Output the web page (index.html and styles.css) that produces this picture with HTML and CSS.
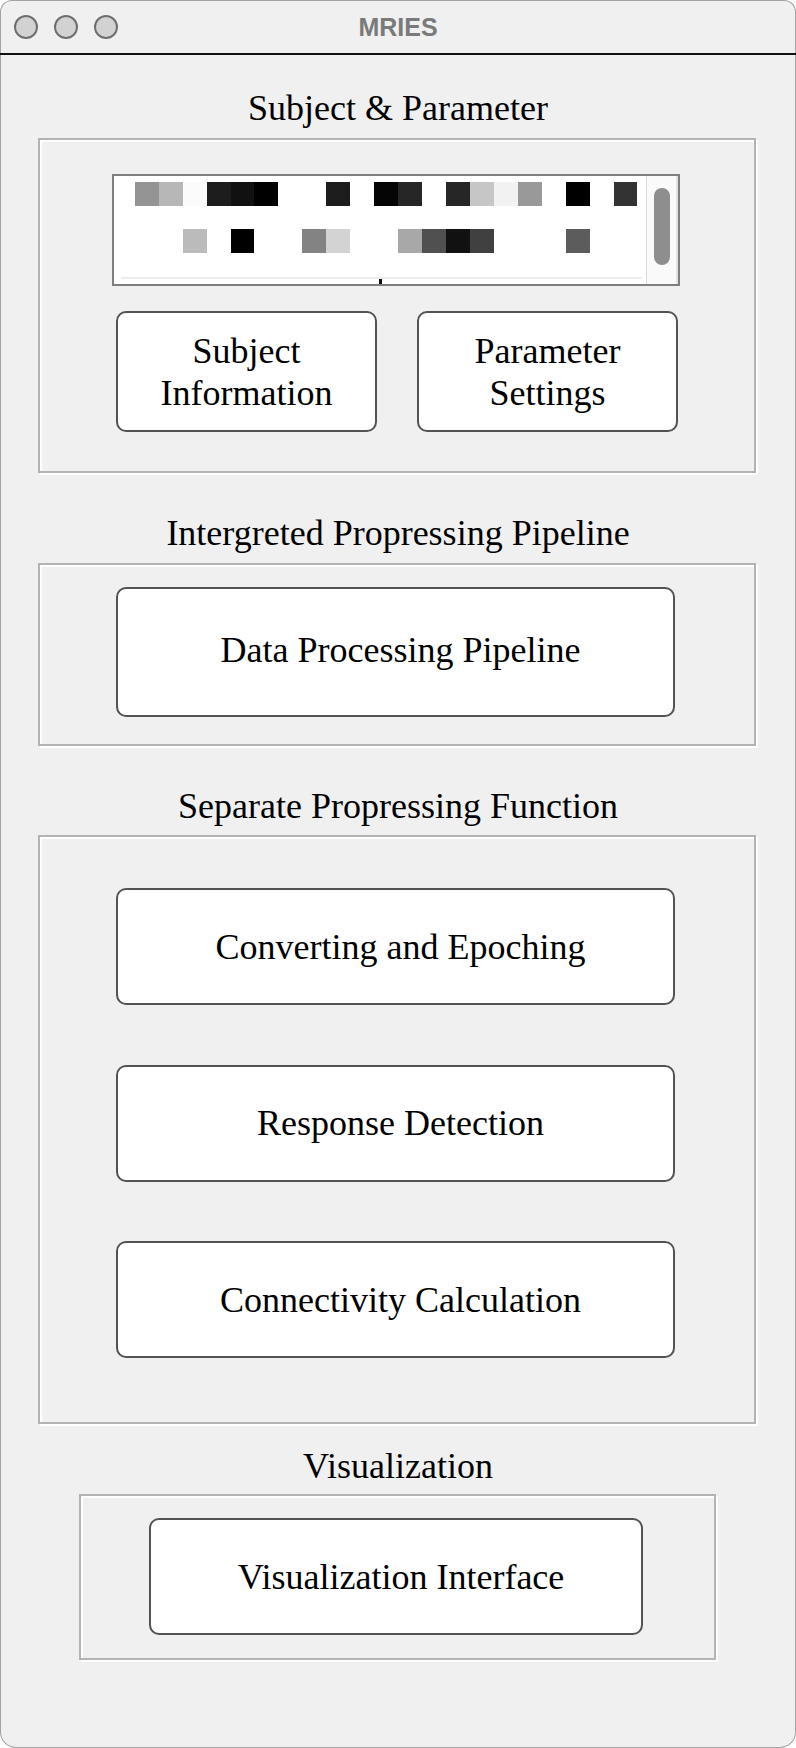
FILE: index.html
```html
<!DOCTYPE html>
<html>
<head>
<meta charset="utf-8">
<title>MRIES</title>
<link rel="stylesheet" href="styles.css">
</head>
<body>
<div class="window">
  <header class="titlebar">
    <div class="lights"><span class="light"></span><span class="light"></span><span class="light"></span></div>
    <div class="title">MRIES</div>
    <div class="spacer"></div>
  </header>
  <main class="content">
    <section class="sec sec-1">
      <h2 class="heading">Subject &amp; Parameter</h2>
      <div class="panel panel-1">
        <div class="listbox">
          <div class="list-area">
            <div class="mosaic">
              <span class="c94"></span><span class="cb7"></span><span class="cfb"></span><span class="c1e"></span><span class="c11"></span><span class="c0"></span><span></span><span></span><span class="c1e"></span><span></span><span class="c05"></span><span class="c26"></span><span></span><span class="c26"></span><span class="cc6"></span><span class="cf2"></span><span class="c99"></span><span></span><span class="c0"></span><span></span><span class="c33"></span>
              <span></span><span></span><span class="cbb"></span><span></span><span class="c0"></span><span></span><span></span><span class="c83"></span><span class="cd3"></span><span></span><span></span><span class="ca8"></span><span class="c50"></span><span class="c11"></span><span class="c40"></span><span></span><span></span><span></span><span class="c5c"></span><span></span><span></span>
            </div>
            <div class="hline"></div>
            <div class="tick"></div>
          </div>
          <div class="vscroll"><div class="thumb"></div></div>
        </div>
        <div class="btn-row">
          <button class="btn btn-small">Subject<br>Information</button>
          <button class="btn btn-small">Parameter<br>Settings</button>
        </div>
      </div>
    </section>

    <section class="sec sec-2">
      <h2 class="heading">Intergreted Propressing Pipeline</h2>
      <div class="panel panel-2">
        <button class="btn btn-wide btn-tall">Data Processing Pipeline</button>
      </div>
    </section>

    <section class="sec sec-3">
      <h2 class="heading">Separate Propressing Function</h2>
      <div class="panel panel-3">
        <button class="btn btn-wide">Converting and Epoching</button>
        <button class="btn btn-wide">Response Detection</button>
        <button class="btn btn-wide">Connectivity Calculation</button>
      </div>
    </section>

    <section class="sec sec-4">
      <h2 class="heading">Visualization</h2>
      <div class="panel panel-4">
        <button class="btn btn-vis">Visualization Interface</button>
      </div>
    </section>
  </main>
</div>
</body>
</html>
```

FILE: styles.css
```css
* { box-sizing: border-box; }

html, body {
  margin: 0;
  padding: 0;
  background: #ffffff;
}

.window {
  width: 796px;
  height: 1748px;
  background: #f0f0f0;
  border-radius: 12px 12px 16px 16px;
  box-shadow: inset 0 0 0 1px #a3a3a3;
  overflow: hidden;
  font-family: "Liberation Serif", "Times New Roman", serif;
  color: #000;
}

.titlebar {
  height: 55px;
  border-bottom: 2px solid #111;
  display: grid;
  grid-template-columns: 1fr auto 1fr;
  align-items: center;
}

.lights {
  display: flex;
  gap: 16px;
  padding-left: 14px;
}

.light {
  width: 24px;
  height: 24px;
  border-radius: 50%;
  background: #d2d2d2;
  border: 2px solid #6f6f6f;
}

.title {
  font-family: "Liberation Sans", Arial, sans-serif;
  font-weight: bold;
  font-size: 25px;
  color: #7a7a7a;
  line-height: 30px;
}

.content {
  display: flex;
  flex-direction: column;
}

.heading {
  margin: 0;
  font-size: 36px;
  font-weight: normal;
  line-height: 40px;
  height: 40px;
  text-align: center;
  white-space: nowrap;
}

.sec-1 { padding-top: 33px; }
.sec-1 .heading { margin-bottom: 10px; }
.sec-2 { margin-top: 40px; }
.sec-2 .heading { margin-bottom: 10px; }
.sec-3 { margin-top: 40px; }
.sec-3 .heading { margin-bottom: 9px; }
.sec-4 { margin-top: 22px; }
.sec-4 .heading { margin-bottom: 8px; }

.panel {
  margin-left: 38px;
  width: 718px;
  border: 2px solid #b3b3b3;
  box-shadow: inset 2px 2px 0 0 #ffffff, 2px 2px 0 0 #ffffff;
  display: flex;
  flex-direction: column;
}

.panel-1 { padding: 34px 0 39px; }
.panel-2 { padding: 22px 0 27px; }
.panel-3 { padding: 51px 0 64px; gap: 59.5px; }
.panel-4 {
  margin-left: 79px;
  width: 637px;
  padding: 22px 0 23px;
}

/* list box */
.listbox {
  margin-left: 72px;
  width: 568px;
  height: 112px;
  border: 2px solid #7f7f7f;
  background: #ffffff;
  display: flex;
}

.list-area {
  flex: 1;
  padding: 6px 0 0 20.8px;
  overflow: hidden;
}

.mosaic {
  display: grid;
  grid-template-columns: repeat(21, 23.95px);
  grid-template-rows: 23.5px 23.5px;
  row-gap: 23.5px;
}

.mosaic span { display: block; }
.c0 { background: #000000; }
.c05 { background: #050505; }
.c11 { background: #111111; }
.c1e { background: #1e1d1d; }
.c26 { background: #262626; }
.c33 { background: #333333; }
.c40 { background: #404040; }
.c50 { background: #505050; }
.c5c { background: #5c5c5c; }
.c83 { background: #838383; }
.c94 { background: #949494; }
.c99 { background: #999999; }
.ca8 { background: #a8a8a8; }
.cb7 { background: #b7b7b7; }
.cbb { background: #bbbbbb; }
.cc6 { background: #c6c6c6; }
.cd3 { background: #d3d3d3; }
.cf2 { background: #f2f2f2; }
.cfb { background: #fbfbfb; }

.hline {
  margin-top: 24.2px;
  margin-left: -13.8px;
  width: 521px;
  height: 2px;
  background: #ededed;
}

.tick {
  margin-left: 244px;
  width: 3px;
  height: 6px;
  background: #111;
}

.vscroll {
  width: 32px;
  background: #fafafa;
  border-left: 1px solid #dadada;
  border-right: 2px solid #e2e2e2;
  padding: 12px 0 0 7px;
}

.thumb {
  width: 16px;
  height: 77px;
  border-radius: 8px;
  background: #8e8e8e;
}

/* buttons */
.btn {
  background: #ffffff;
  border: 2px solid #535353;
  border-radius: 10px;
  font-family: "Liberation Serif", "Times New Roman", serif;
  font-size: 36px;
  line-height: 40px;
  color: #000;
  padding: 0;
  margin: 0;
  display: flex;
  align-items: center;
  justify-content: center;
  text-align: center;
  white-space: nowrap;
}

.btn-row {
  margin-top: 25px;
  margin-left: 76px;
  display: flex;
  gap: 40px;
}

.btn-small {
  width: 261px;
  height: 121px;
  line-height: 42px;
}

.btn-wide {
  margin-left: 76px;
  width: 559px;
  height: 117px;
  padding-left: 10px;
}

.btn-tall {
  height: 130px;
  padding-bottom: 4px;
}

.btn-vis {
  margin-left: 68px;
  width: 494px;
  height: 117px;
  padding-left: 10px;
}
```
